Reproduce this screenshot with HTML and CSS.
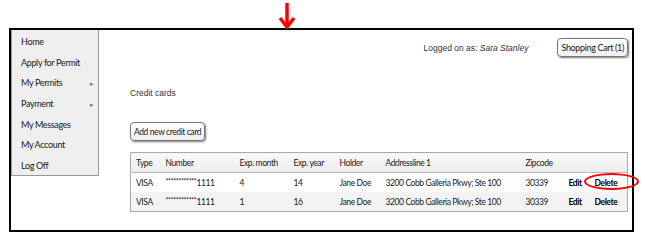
FILE: index.html
```html
<!DOCTYPE html>
<html lang="en">
<head>
    <meta charset="UTF-8">
    <title>Credit cards</title>
    <link rel="stylesheet" href="styles.css">
</head>
<body>

<div class="arrow">
    <svg width="18" height="27" viewBox="0 0 18 27">
        <path d="M9 1 V24" stroke="#f00" stroke-width="3.5" fill="none"/>
        <path d="M2 16 L9 25 L16 16" stroke="#f00" stroke-width="3.5" fill="none"/>
    </svg>
</div>

<div class="frame">
    <ul class="menu">
        <li>Home</li>
        <li>Apply for Permit</li>
        <li>My Permits <span class="sub">&#9656;</span></li>
        <li>Payment <span class="sub">&#9656;</span></li>
        <li>My Messages</li>
        <li>My Account</li>
        <li>Log Off</li>
    </ul>

    <div class="content">
        <div class="topbar">
            <span class="logged">Logged on as: <em>Sara Stanley</em></span>
            <button class="btn cart">Shopping Cart (1)</button>
        </div>

        <h2>Credit cards</h2>

        <button class="btn">Add new credit card</button>

        <table class="cards">
            <colgroup>
                <col style="width:30px"><col style="width:74px"><col style="width:54px">
                <col style="width:46px"><col style="width:46px"><col style="width:140px">
                <col style="width:43px"><col style="width:26px"><col style="width:38px">
            </colgroup>
            <tr class="head">
                <th>Type</th><th>Number</th><th>Exp. month</th><th>Exp. year</th><th>Holder</th>
                <th>Addressline 1</th><th>Zipcode</th><th></th><th></th>
            </tr>
            <tr>
                <td>VISA</td><td><span class="stars">************</span>1111</td><td>4</td><td>14</td><td>Jane Doe</td>
                <td>3200 Cobb Galleria Pkwy; Ste 100</td><td>30339</td><td class="act">Edit</td>
                <td class="act"><span class="circled">Delete</span></td>
            </tr>
            <tr class="alt">
                <td>VISA</td><td><span class="stars">************</span>1111</td><td>1</td><td>16</td><td>Jane Doe</td>
                <td>3200 Cobb Galleria Pkwy; Ste 100</td><td>30339</td><td class="act">Edit</td>
                <td class="act">Delete</td>
            </tr>
        </table>
    </div>
</div>

</body>
</html>
```

FILE: styles.css
```css
body {
    margin: 0;
    background: #fff;
    font-family: Lato, "Liberation Sans", sans-serif;
    font-size: 9px;
    letter-spacing: -0.35px;
    color: #1a1a1a;
}
.arrow {
    position: absolute;
    left: 278px;
    top: 2px;
}
.frame {
    margin: 28px 0 0 9px;
    width: 621px;
    height: 200px;
    border: 2px solid #000;
    display: flex;
    align-items: flex-start;
}
.menu {
    flex-shrink: 0;
    list-style: none;
    margin: 0;
    padding: 2px 0 0;
    width: 86px;
    height: 143px;
    background: #efefef;
    border: 1px solid #999;
    border-top: none;
}
.menu li {
    height: 20.7px;
    line-height: 20px;
    padding-left: 9px;
    position: relative;
}
.menu .sub {
    position: absolute;
    left: 78px;
    font-size: 7px;
    color: #777;
}
.content {
    flex: 1;
    padding: 8px 5px 0 31px;
    display: flex;
    flex-direction: column;
    align-items: flex-start;
}
.topbar {
    align-self: stretch;
    display: flex;
    justify-content: flex-end;
    align-items: center;
    gap: 29px;
    font-family: "Liberation Sans", Arial, sans-serif;
    font-size: 8.5px;
    letter-spacing: 0;
    color: #333;
}
.btn {
    font-family: Lato, "Liberation Sans", sans-serif;
    font-size: 8.5px;
    letter-spacing: -0.4px;
    color: #1a1a1a;
    height: 19px;
    padding: 0 3px;
    background: linear-gradient(#fff, #f0f0f0);
    border: 1px solid #777;
    border-radius: 4px;
    box-shadow: 1px 1px 2px #777;
}
.btn.cart {
    font-size: 9px;
    letter-spacing: -0.35px;
}
h2 {
    margin: 31px 0 24px;
    font-family: "Liberation Sans", Arial, sans-serif;
    font-size: 8.5px;
    letter-spacing: 0;
    font-weight: normal;
    color: #333;
}
.cards {
    margin-top: 11px;
    width: 497px;
    table-layout: fixed;
    border-collapse: collapse;
    border: 1px solid #aaa;
    font-size: 8.5px;
    letter-spacing: -0.4px;
}
.cards th,
.cards td {
    text-align: left;
    font-weight: normal;
    padding: 0 0 0 5px;
    height: 19px;
    white-space: nowrap;
}
.cards .head th {
    height: 19px;
    background: linear-gradient(#fafafa, #ececec);
    border-bottom: 1px solid #bbb;
}
.cards .alt {
    background: #f3f3f3;
}
.stars {
    font-size: 7px;
    letter-spacing: -0.4px;
    vertical-align: 2px;
}
.cards .act {
    font-weight: bold;
    color: #000;
}
.circled {
    position: relative;
}
.circled::after {
    content: "";
    position: absolute;
    left: -11px;
    top: -5px;
    width: 51px;
    height: 13px;
    border: 2.5px solid #f00;
    border-radius: 50%;
}
```
